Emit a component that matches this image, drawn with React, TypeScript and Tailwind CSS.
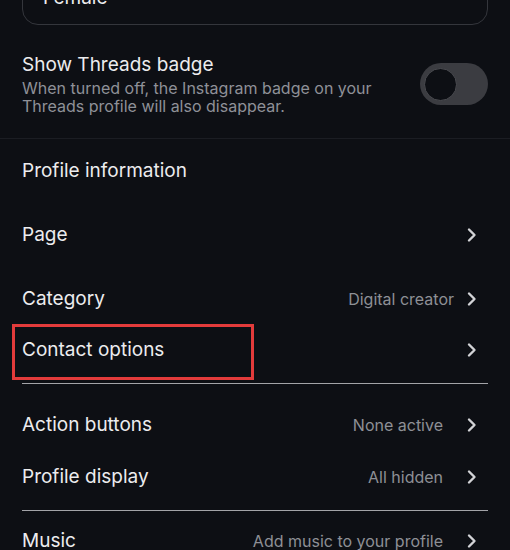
import React from "react";

// chevron used on every navigation row
function Chevron() {
  return (
    <svg width="12" height="16" viewBox="0 0 12 16" fill="none" className="shrink-0">
      <polyline points="3,2.5 8.5,8 3,13.5" stroke="#d2d3d6" strokeWidth="2.4" strokeLinecap="round" strokeLinejoin="round" />
    </svg>
  );
}

type RowProps = {
  label: string;
  value?: string;
  gap?: string;
  chevron?: boolean;
  height: string;
  children?: React.ReactNode;
};

function Row({ label, value, gap = "mr-[23px]", chevron = true, height, children }: RowProps) {
  return (
    <div className={`relative shrink-0 flex items-center pl-[22px] pr-[32px] ${height}`}>
      {children}
      <span className="text-[19px] text-[#ececee] leading-6">{label}</span>
      <div className="ml-auto flex items-center">
        {value && <span className={`text-[16px] text-[#8e9096] ${gap}`}>{value}</span>}
        {chevron && <Chevron />}
      </div>
    </div>
  );
}

export default function App() {
  return (
    <div
      className="w-[510px] h-[550px] overflow-hidden bg-[#0d0f14] flex flex-col"
      style={{ fontFamily: "Inter, 'Noto Sans', sans-serif" }}
    >
      {/* Gender field, mostly scrolled away */}
      <div className="mx-[22px] mt-[-29px] h-[54px] shrink-0 rounded-[16px] border border-[#34363c] flex items-center pl-[20px]">
        <span className="text-[19px] text-[#ececee]">Female</span>
      </div>

      {/* Threads badge toggle */}
      <div className="shrink-0 flex items-center pl-[22px] pr-[22px] mt-[28px]">
        <div className="flex flex-col">
          <span className="text-[19px] leading-6 text-[#ececee]">Show Threads badge</span>
          <span className="mt-[2px] text-[16px] leading-[18px] text-[#8f9198]">
            When turned off, the Instagram badge on your
            <br />
            Threads profile will also disappear.
          </span>
        </div>
        <div className="ml-auto w-[68px] h-[42px] rounded-full bg-[#3b3c41] flex items-center pl-[4px]">
          <div className="w-[33px] h-[33px] rounded-full bg-[#0d0f14] border border-[#4a4b50]" />
        </div>
      </div>

      <div className="mt-[23px] h-px bg-[#1b1d23] shrink-0" />

      <Row label="Profile information" chevron={false} height="h-[64px]" />
      <Row label="Page" height="h-[64px]" />
      <Row label="Category" value="Digital creator" gap="mr-[12px]" height="h-[64px]" />
      <Row label="Contact options" height="h-[38px]">
        <div className="absolute top-[-7px] left-[12px] w-[242px] h-[56px] border-[3px] border-[#e23b3b]" />
      </Row>

      <div className="mx-[22px] mt-[14px] h-px bg-[#a3a4a8] shrink-0" />

      <div className="h-[15px] shrink-0" />
      <Row label="Action buttons" value="None active" height="h-[52px]" />
      <Row label="Profile display" value="All hidden" height="h-[52px]" />

      <div className="mx-[22px] mt-[7px] h-px bg-[#a3a4a8] shrink-0" />

      <Row label="Music" value="Add music to your profile" height="h-[60px]" />
    </div>
  );
}
